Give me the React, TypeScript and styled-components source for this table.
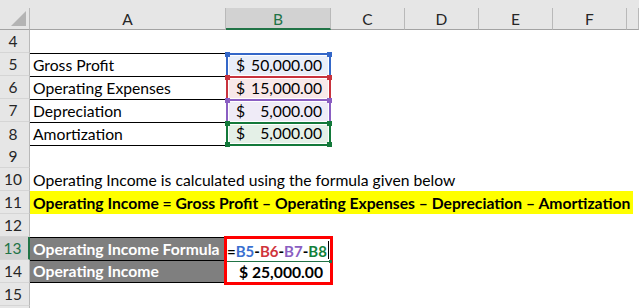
import React from "react";
import styled, { createGlobalStyle, css } from "styled-components";

const GlobalStyle = createGlobalStyle`
  html, body { margin: 0; padding: 0; background: #ffffff; }
  * { box-sizing: border-box; }
`;

const COLS = "30px 196px 105px 74px 74px 74px 74px 12px";
const FONT = `"Lato", "Noto Sans", sans-serif`;

const tones = {
  blue: { line: "#3467c8", fill: "#e9eef9", text: "#3a6fd0" },
  red: { line: "#c8323d", fill: "#f8e8e9", text: "#d0343c" },
  purple: { line: "#8a5ec2", fill: "#efebf7", text: "#8a5ec2" },
  green: { line: "#13793a", fill: "#e4f0e7", text: "#13813b" },
};
type Tone = keyof typeof tones;

const Sheet = styled.div`
  width: 639px;
  height: 308px;
  overflow: hidden;
  background: #ffffff;
  font-family: ${FONT};
  font-size: 15.7px;
  color: #000;
`;

const HeaderRow = styled.div`
  display: grid;
  grid-template-columns: ${COLS};
  height: 30px;
  background: #e6e6e6;
`;

const Corner = styled.div`
  margin-top: 8px;
  border-right: 1px solid #b9b9b9;
  border-bottom: 1px solid #a3a3a3;
  display: flex;
  align-items: flex-end;
  justify-content: flex-end;
  padding: 0 3px 3px 0;
`;

const ColHeader = styled.div<{ $selected?: boolean }>`
  margin-top: 8px;
  display: flex;
  align-items: center;
  justify-content: center;
  color: #262626;
  font-size: 15.5px;
  padding-top: 1px;
  border-right: 1px solid #b9b9b9;
  border-bottom: 1px solid #a3a3a3;
  ${(p) =>
    p.$selected &&
    css`
      background: #d2d2d2;
      color: #217346;
      border-bottom: 2px solid #217346;
    `}
`;

const Row = styled.div`
  display: grid;
  grid-template-columns: ${COLS};
  height: 23px;
`;

const RowHeader = styled.div<{ $selected?: boolean }>`
  background: #e6e6e6;
  border-right: 1px solid #b9b9b9;
  border-bottom: 1px solid #d5d5d5;
  display: flex;
  align-items: center;
  justify-content: center;
  color: #262626;
  font-size: 15.5px;
  padding-right: 3px;
  ${(p) =>
    p.$selected &&
    css`
      background: #d2d2d2;
      color: #217346;
      border-right: 2px solid #217346;
    `}
`;

const TextCell = styled.div<{ $bold?: boolean; $span?: boolean }>`
  display: flex;
  align-items: flex-end;
  padding: 0 0 2px 3px;
  white-space: nowrap;
  line-height: 18px;
  font-weight: ${(p) => (p.$bold ? 700 : 400)};
  ${(p) =>
    p.$span &&
    css`
      grid-column: 2 / -1;
    `}
`;

const LabelCell = styled(TextCell)<{ $last?: boolean }>`
  border-top: 1px solid #000;
  ${(p) =>
    p.$last &&
    css`
      border-bottom: 1px solid #000;
    `}
`;

const Highlight = styled(TextCell)`
  grid-column: 2 / -1;
  margin-right: 6px;
  background: #ffff00;
  font-weight: 700;
`;

const AmountCell = styled.div<{ $tone: Tone; $last?: boolean }>`
  position: relative;
  display: flex;
  align-items: flex-end;
  justify-content: space-between;
  padding: 0 7px 2px 8px;
  line-height: 18px;
  background: ${(p) => tones[p.$tone].fill};
  border: 2px solid ${(p) => tones[p.$tone].line};
  border-bottom: ${(p) => (p.$last ? `2px solid ${tones[p.$tone].line}` : "none")};
  box-shadow: inset 0 0 0 1px #ffffff;
`;

const Handle = styled.span<{ $tone: Tone; $x: "left" | "right"; $y: "top" | "bottom" }>`
  position: absolute;
  width: 5px;
  height: 5px;
  background: ${(p) => tones[p.$tone].line};
  ${(p) => (p.$x === "left" ? "left: -3px;" : "right: -3px;")}
  ${(p) => (p.$y === "top" ? "top: -3px;" : "bottom: -3px;")}
`;

const Summary = styled.div`
  display: grid;
  grid-template-columns: 30px 196px 105px 1fr;
  grid-template-rows: 23px 23px;
`;

const SummaryLabel = styled.div<{ $row: number }>`
  grid-column: 2;
  grid-row: ${(p) => p.$row};
  background: #7f7f7f;
  color: #ffffff;
  font-weight: 700;
  border-top: 1px solid #000;
  ${(p) => p.$row === 2 && "border-bottom: 1px solid #000;"}
  display: flex;
  align-items: flex-end;
  padding: 0 0 2px 3px;
  line-height: 18px;
  white-space: nowrap;
`;

const SummaryHeader = styled(RowHeader)<{ $row: number }>`
  grid-column: 1;
  grid-row: ${(p) => p.$row};
`;

const ResultBox = styled.div`
  grid-column: 3;
  grid-row: 1 / span 2;
  margin: -1px -2px -2px -2px;
  border: 3px solid #ff0000;
  display: grid;
  grid-template-rows: 23px 1fr;
  background: #fff;
  position: relative;
`;

const FormulaLine = styled.div`
  position: relative;
  display: flex;
  align-items: flex-end;
  padding: 0 0 1px 0;
  line-height: 18px;
  font-size: 15px;
  font-weight: 700;
  white-space: nowrap;
  border-bottom: 1px solid #217346;
  margin-right: 1px;
`;

const Ref = styled.span<{ $tone?: Tone }>`
  color: ${(p) => (p.$tone ? tones[p.$tone].text : "#000")};
`;

const Caret = styled.span`
  display: inline-block;
  width: 1px;
  height: 18px;
  background: #000;
  margin-left: 1px;
  align-self: center;
`;

const FillHandle = styled.span`
  position: absolute;
  right: -3px;
  bottom: -2px;
  width: 3px;
  height: 3px;
  background: #217346;
`;

const ResultLine = styled.div`
  display: flex;
  align-items: flex-end;
  justify-content: center;
  padding: 0 0 1px 5px;
  line-height: 18px;
  font-weight: 700;
`;

const Empty = styled.div``;

const amounts: { label: string; value: string; tone: Tone }[] = [
  { label: "Gross Profit", value: "50,000.00", tone: "blue" },
  { label: "Operating Expenses", value: "15,000.00", tone: "red" },
  { label: "Depreciation", value: "5,000.00", tone: "purple" },
  { label: "Amortization", value: "5,000.00", tone: "green" },
];

function CornerTriangle() {
  return (
    <svg width="15" height="15" viewBox="0 0 15 15">
      <polygon points="15,0 15,15 0,15" fill="#b4b4b4" />
    </svg>
  );
}

export default function App() {
  return (
    <>
      <GlobalStyle />
      <Sheet>
        <HeaderRow>
          <Corner>
            <CornerTriangle />
          </Corner>
          <ColHeader>A</ColHeader>
          <ColHeader $selected>B</ColHeader>
          <ColHeader>C</ColHeader>
          <ColHeader>D</ColHeader>
          <ColHeader>E</ColHeader>
          <ColHeader>F</ColHeader>
          <ColHeader />
        </HeaderRow>

        <Row>
          <RowHeader>4</RowHeader>
        </Row>

        {amounts.map((a, i) => (
          <Row key={a.label}>
            <RowHeader>{5 + i}</RowHeader>
            <LabelCell $last={i === amounts.length - 1}>{a.label}</LabelCell>
            <AmountCell $tone={a.tone} $last={i === amounts.length - 1}>
              <span>$</span>
              <span>{a.value}</span>
              <Handle $tone={a.tone} $x="left" $y="top" />
              <Handle $tone={a.tone} $x="right" $y="top" />
              {i === amounts.length - 1 && (
                <>
                  <Handle $tone={a.tone} $x="left" $y="bottom" />
                  <Handle $tone={a.tone} $x="right" $y="bottom" />
                </>
              )}
            </AmountCell>
          </Row>
        ))}

        <Row>
          <RowHeader>9</RowHeader>
        </Row>
        <Row>
          <RowHeader>10</RowHeader>
          <TextCell $span>Operating Income is calculated using the formula given below</TextCell>
        </Row>
        <Row>
          <RowHeader>11</RowHeader>
          <Highlight>
            Operating Income = Gross Profit – Operating Expenses – Depreciation – Amortization
          </Highlight>
        </Row>
        <Row>
          <RowHeader>12</RowHeader>
        </Row>

        <Summary>
          <SummaryHeader $row={1} $selected>
            13
          </SummaryHeader>
          <SummaryHeader $row={2}>14</SummaryHeader>
          <SummaryLabel $row={1}>Operating Income Formula</SummaryLabel>
          <SummaryLabel $row={2}>Operating Income</SummaryLabel>
          <ResultBox>
            <FormulaLine>
              <Ref>=</Ref>
              <Ref $tone="blue">B5</Ref>
              <Ref>-</Ref>
              <Ref $tone="red">B6</Ref>
              <Ref>-</Ref>
              <Ref $tone="purple">B7</Ref>
              <Ref>-</Ref>
              <Ref $tone="green">B8</Ref>
              <Caret />
              <FillHandle />
            </FormulaLine>
            <ResultLine>$ 25,000.00</ResultLine>
          </ResultBox>
        </Summary>

        <Row>
          <RowHeader>15</RowHeader>
        </Row>
        <Row>
          <RowHeader />
          <Empty />
        </Row>
      </Sheet>
    </>
  );
}
